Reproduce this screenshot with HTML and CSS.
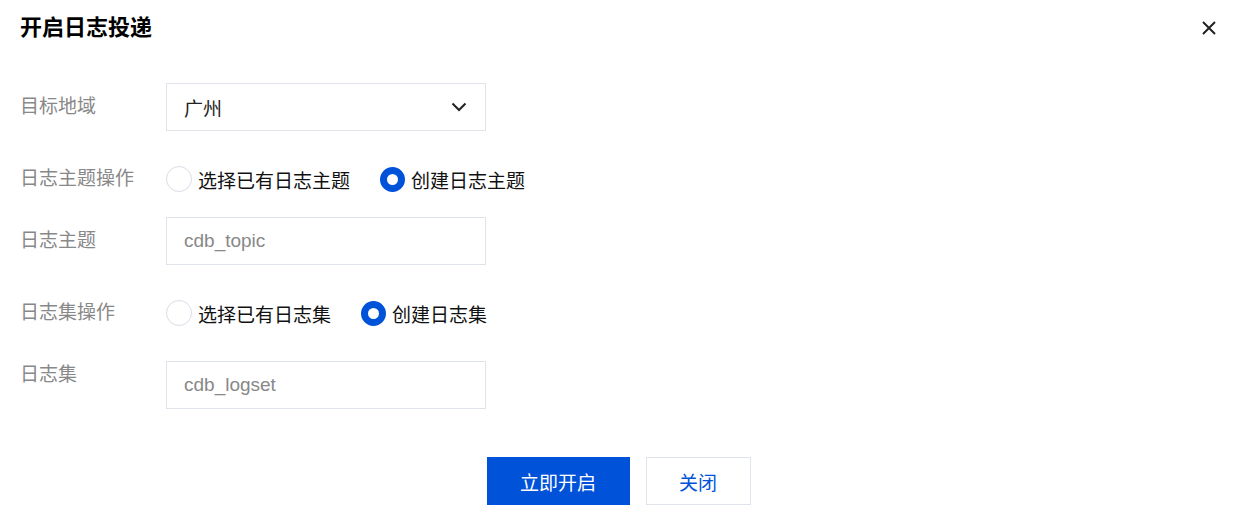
FILE: index.html
```html
<!DOCTYPE html>
<html lang="zh-CN">
<head>
<meta charset="utf-8">
<title>开启日志投递</title>
<link rel="stylesheet" href="styles.css">
</head>
<body>
<div class="dialog">
  <div class="header">
    <h2 class="title">开启日志投递</h2>
    <button class="close" aria-label="关闭">
      <svg width="14" height="14" viewBox="0 0 14 14"><path d="M1 1L13 13M13 1L1 13" stroke="#222" stroke-width="2" fill="none"/></svg>
    </button>
  </div>
  <div class="form">
    <div class="row row-a">
      <div class="label">目标地域</div>
      <div class="control">
        <div class="select">
          <span class="value">广州</span>
          <svg class="chevron" width="16" height="10" viewBox="0 0 16 10"><path d="M1.5 1.5L8 8L14.5 1.5" stroke="#222" stroke-width="2" fill="none"/></svg>
        </div>
      </div>
    </div>
    <div class="row row-b">
      <div class="label">日志主题操作</div>
      <div class="control radios">
        <label class="radio"><span class="dot"></span>选择已有日志主题</label>
        <label class="radio checked"><span class="dot"></span>创建日志主题</label>
      </div>
    </div>
    <div class="row row-c">
      <div class="label">日志主题</div>
      <div class="control">
        <div class="input placeholder">cdb_topic</div>
      </div>
    </div>
    <div class="row row-a">
      <div class="label">日志集操作</div>
      <div class="control radios">
        <label class="radio"><span class="dot"></span>选择已有日志集</label>
        <label class="radio checked"><span class="dot"></span>创建日志集</label>
      </div>
    </div>
    <div class="row row-a row-top">
      <div class="label">日志集</div>
      <div class="control">
        <div class="input placeholder">cdb_logset</div>
      </div>
    </div>
  </div>
  <div class="footer">
    <button class="btn btn-primary">立即开启</button>
    <button class="btn btn-default">关闭</button>
  </div>
</div>
</body>
</html>
```

FILE: styles.css
```css
* { box-sizing: border-box; }
html, body {
  margin: 0;
  padding: 0;
  background: #fff;
  font-family: "Liberation Sans", "Noto Sans CJK SC", sans-serif;
  color: #222;
}
.dialog {
  width: 1233px;
  height: 518px;
  padding: 0 20px;
}
.header {
  display: flex;
  align-items: center;
  justify-content: space-between;
  height: 55px;
}
.title {
  margin: 0;
  font-size: 22px;
  font-weight: bold;
  color: #000;
  line-height: 28px;
}
.close {
  border: 0;
  background: none;
  padding: 0;
  margin-right: -6px;
  width: 20px;
  height: 20px;
  display: flex;
  align-items: center;
  justify-content: center;
}
.form {
  padding-top: 28px;
}
.row {
  display: flex;
  align-items: center;
  height: 48px;
}
.row-a { margin-top: 24px; }
.row-a:first-child { margin-top: 0; }
.row-b { margin-top: 24px; }
.row-c { margin-top: 14px; }
.row-top { align-items: flex-start; }
.row-top .label { line-height: 28px; }
.label {
  width: 146px;
  flex-shrink: 0;
  font-size: 19px;
  color: #888;
  line-height: 26px;
}
.control {
  display: flex;
  align-items: center;
}
.select, .input {
  width: 320px;
  height: 48px;
  border: 1px solid #dfe3ea;
  display: flex;
  align-items: center;
  padding: 0 17px 0 17px;
  font-size: 19px;
}
.select {
  justify-content: space-between;
  color: #222;
}
.chevron { margin-right: 1px; }
.placeholder { color: #888; }
.radio {
  display: flex;
  align-items: center;
  font-size: 19px;
  color: #111;
  margin-right: 30px;
}
.dot {
  width: 26px;
  height: 26px;
  border-radius: 50%;
  border: 1px solid #d8dde6;
  margin-right: 6px;
  background: #fff;
}
.checked .dot {
  border: 7px solid #0052d9;
  width: 25px;
  height: 25px;
}
.footer {
  display: flex;
  justify-content: center;
  gap: 16px;
  margin-top: 48px;
  padding-left: 4px;
}
.btn {
  height: 48px;
  font-family: "Liberation Sans", "Noto Sans CJK SC", sans-serif;
  font-size: 19px;
  border: 1px solid #dfe3ec;
  background: #fff;
  padding: 0;
}
.btn-primary {
  width: 143px;
  background: #0052d9;
  border-color: #0052d9;
  color: #fff;
}
.btn-default {
  width: 105px;
  color: #0052d9;
}
```
